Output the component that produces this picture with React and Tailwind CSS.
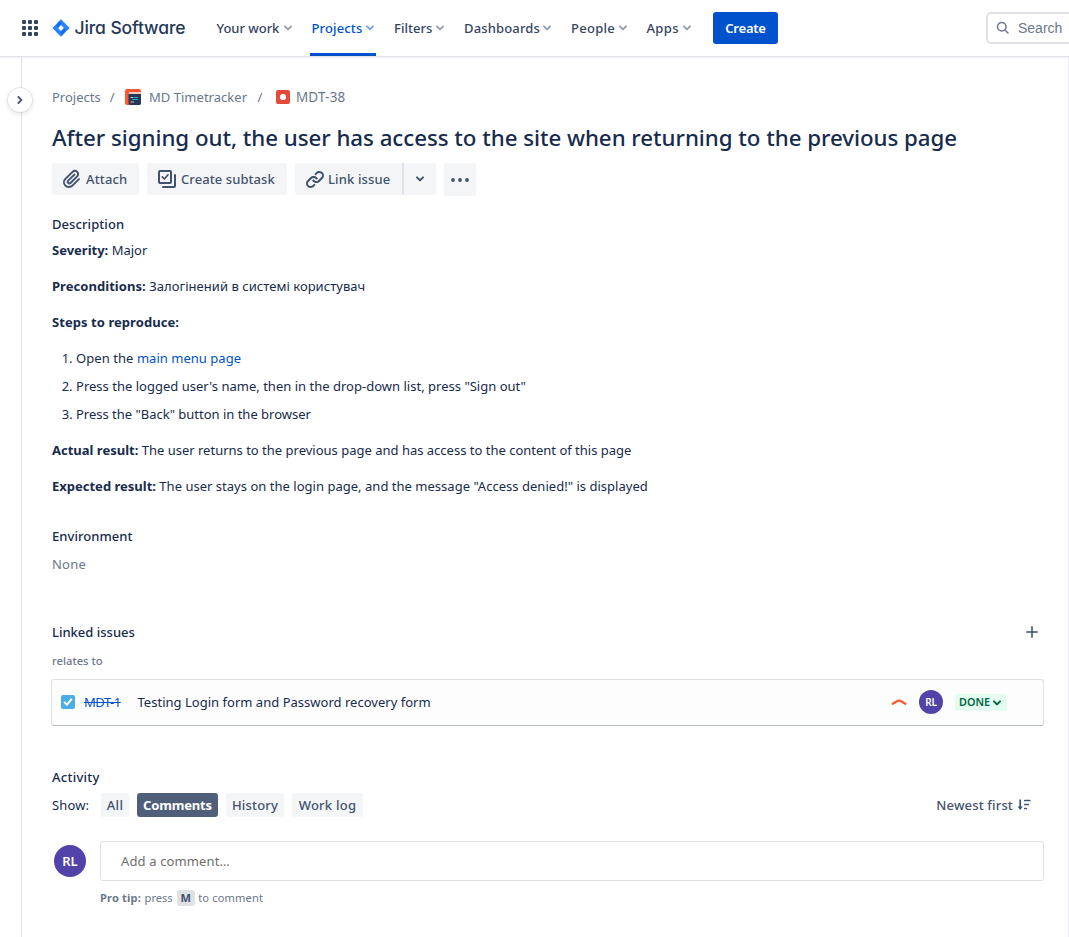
import React from 'react';

const CHEVRON =
  'M8.292 10.293a1.009 1.009 0 000 1.419l2.939 2.965c.218.215.5.322.779.322s.556-.107.769-.322l2.93-2.955a1.01 1.01 0 000-1.419.987.987 0 00-1.406 0l-2.298 2.317-2.307-2.327a.99.99 0 00-1.406 0z';

function Chevron({ className = '' }) {
  return (
    <svg viewBox="7 7.6 10 10" className={`h-2.5 w-2.5 shrink-0 ${className}`} fill="currentColor">
      <path d={CHEVRON} />
    </svg>
  );
}

function AppSwitcherIcon() {
  const steps = [0, 6, 12];
  return (
    <svg viewBox="0 0 16 16" className="h-4 w-4 shrink-0 text-[#344563]" fill="currentColor">
      {steps.map((y) => steps.map((x) => <rect key={`${x}-${y}`} x={x} y={y} width="4" height="4" rx="1" />))}
    </svg>
  );
}

function JiraMark() {
  return (
    <svg viewBox="0 0 18 18" className="ml-3.5 h-[18px] w-[18px] shrink-0">
      <path d="M9 0.2 17.2 8.4a.9.9 0 0 1 0 1.2L9 17.8.8 9.6a.9.9 0 0 1 0-1.2z" fill="#2684FF" />
      <path d="M9 2v4.100L6.100 9 4.600 7.500Q4.500 5 9 2z" fill="#0052CC" opacity=".5" />
      <path d="M9 16v-4.100L11.900 9l1.500 1.500Q13.500 13 9 16z" fill="#0052CC" opacity=".5" />
      <path d="M9 6.100 11.900 9 9 11.900 6.100 9z" fill="#fff" />
    </svg>
  );
}

const navItems = [
  { label: 'Your work', width: 'w-[76px]', track: 'tracking-[-0.03px]' },
  { label: 'Projects', width: 'w-[63.5px]', track: 'tracking-[0.14px]', active: true },
  { label: 'Filters', width: 'w-[51px]', track: 'tracking-[0.03px]' },
  { label: 'Dashboards', width: 'w-[88px]', track: 'tracking-[0.16px]' },
  { label: 'People', width: 'w-[56.5px]', track: 'tracking-[0.27px]' },
  { label: 'Apps', width: 'w-[45px]', track: 'tracking-[0.35px]' },
];

function Header() {
  return (
    <header className="relative z-10 flex h-14 shrink-0 items-center overflow-visible bg-white pl-[22px] shadow-[0_1px_0_#dfe1e6,0_2px_2px_rgba(9,30,66,0.06)]">
      <AppSwitcherIcon />
      <JiraMark />
      <span className="ml-[4.500px] w-[138px] shrink-0 whitespace-nowrap text-[17.5px] font-[450] leading-5 tracking-[-0.1px] text-[#253858] [font-family:Inter,sans-serif] [font-feature-settings:'cv11']">
        Jira Software
      </span>
      <nav className="ml-1 flex h-full shrink-0 gap-[19px]">
        {navItems.map((n) => (
          <a
            key={n.label}
            className={`relative flex h-full items-center justify-between whitespace-nowrap font-medium ${n.width} ${n.track} ${
              n.active ? 'text-[#0052CC]' : 'text-[#344563]'
            }`}
          >
            {n.label}
            <Chevron className="opacity-50" />
            {n.active && <span className="absolute -left-[1.5px] bottom-0 h-[3px] w-[66px] bg-[#0052CC]" />}
          </a>
        ))}
      </nav>
      <button className="ml-[21.5px] h-8 w-[65px] shrink-0 rounded-[3px] bg-[#0052CC] font-semibold tracking-[-0.2px] text-white">
        Create
      </button>
      <div className="ml-[208px] flex h-8 w-[160px] shrink-0 items-center rounded-[5px] border-2 border-[#DFE1E6] pl-2 text-[#6B778C]">
        <svg viewBox="0 0 14 14" className="h-3.5 w-3.5" fill="none" stroke="#6B778C" strokeWidth="1.5">
          <circle cx="5.800" cy="5.800" r="4.300" />
          <path d="M9 9 12 12" strokeLinecap="round" />
        </svg>
        <span className="ml-2 text-sm [font-family:'Liberation_Sans',sans-serif]">Search</span>
      </div>
    </header>
  );
}

function Breadcrumbs() {
  return (
    <div className="mt-[31px] flex h-5 items-center whitespace-nowrap text-[#6B778C]">
      <span>Projects</span>
      <span className="ml-[9px]">/</span>
      <svg viewBox="0 0 16 16" className="ml-2.5 h-4 w-4">
        <rect width="16" height="16" rx="2" fill="#FF5630" />
        <path d="M3.500 3H16v11a2 2 0 0 1-2 2H5.500a2 2 0 0 1-2-2z" fill="#253858" />
        <path d="M3.500 5V4a1 1 0 0 1 1-1H16v2z" fill="#F4C9BF" />
        <path d="M5.500 8.500h3M6 13h3" stroke="#C1C7D0" strokeWidth="1" />
        <path d="M9 8.500h4M7 10.500h6" stroke="#2BA3C4" strokeWidth="1" />
        <path d="M5 13h1.500" stroke="#FF5630" strokeWidth="1" />
      </svg>
      <span className="ml-[8.500px] tracking-[0.02px]">MD Timetracker</span>
      <span className="ml-[10.500px]">/</span>
      <svg viewBox="0 0 14 14" className="ml-3.5 h-3.5 w-3.5">
        <rect width="14" height="14" rx="2" fill="#E5493A" />
        <circle cx="7" cy="7" r="3.100" fill="#fff" />
      </svg>
      <span className="ml-[5.500px] text-[13.5px] tracking-[0.19px]">MDT-38</span>
    </div>
  );
}

function Toolbar() {
  const base = 'flex h-8 items-center bg-[#F4F5F7] font-medium text-[#42526E]';
  return (
    <div className="mt-[11px] flex h-8 items-start gap-2 whitespace-nowrap">
      <button className={`${base} w-[87px] rounded-[3px] pl-2`}>
        <svg viewBox="0 0 24 24" className="h-6 w-6" fill="currentColor">
          <path d="M11.643 17.965c-1.53 1.495-4.016 1.496-5.542.004a3.773 3.773 0 01.002-5.412l7.147-6.985a2.316 2.316 0 013.233-.003c.893.873.895 2.282.004 3.153l-6.703 6.55a.653.653 0 01-.914-.008.62.62 0 010-.902l6.229-6.087a.941.941 0 000-1.353.995.995 0 00-1.384 0l-6.23 6.087a2.502 2.502 0 000 3.607 2.643 2.643 0 003.683.009l6.703-6.55a4.074 4.074 0 00-.003-5.859 4.306 4.306 0 00-6.002.003l-7.148 6.985a5.655 5.655 0 00-.001 8.118c2.29 2.239 6.015 2.238 8.31-.005l6.686-6.533a.941.941 0 000-1.353.995.995 0 00-1.384 0l-6.686 6.534z" />
        </svg>
        <span className="ml-0.5 tracking-[0.14px]">Attach</span>
      </button>
      <button className={`${base} w-[140px] rounded-[3px] pl-[11px]`}>
        <svg viewBox="0 0 18 18" className="h-[18px] w-[18px]" fill="none" stroke="currentColor" strokeWidth="2" strokeLinecap="round" strokeLinejoin="round">
          <rect x="1" y="1" width="12" height="12" rx="1" />
          <path d="M4.200 6.900 6.400 9 10 4.800" strokeWidth="1.700" />
          <path d="M17 5v11a1 1 0 0 1-1 1H5" />
        </svg>
        <span className="ml-[5px] tracking-[0.08px]">Create subtask</span>
      </button>
      <div className="flex">
        <button className={`${base} w-[107px] rounded-l-[3px] pl-2`}>
          <svg viewBox="0 0 24 24" className="h-6 w-6" fill="currentColor">
            <path d="M12.856 5.457l-.937.92a1.002 1.002 0 000 1.437 1.047 1.047 0 001.463 0l.984-.966c.967-.95 2.542-1.135 3.602-.288a2.54 2.54 0 01.203 3.81l-2.903 2.852a2.646 2.646 0 01-3.696 0l-1.11-1.09L9 13.57l1.108 1.089c1.822 1.788 4.802 1.788 6.622 0l2.905-2.852a4.558 4.558 0 00-.357-6.82c-1.893-1.517-4.695-1.226-6.422.47" />
            <path d="M11.144 19.543l.937-.92a1.002 1.002 0 000-1.437 1.047 1.047 0 00-1.462 0l-.985.966c-.967.95-2.542 1.135-3.602.288a2.54 2.54 0 01-.203-3.81l2.903-2.852a2.646 2.646 0 013.696 0l1.11 1.09L15 11.43l-1.108-1.089c-1.822-1.788-4.802-1.788-6.622 0l-2.905 2.852a4.558 4.558 0 00.357 6.82c1.893 1.517 4.695 1.226 6.422-.47" />
          </svg>
          <span className="ml-px tracking-[0.13px]">Link issue</span>
        </button>
        <button className={`${base} w-[34px] justify-center rounded-r-[3px] border-l-2 border-[#DFE1E6]`}>
          <Chevron />
        </button>
      </div>
      <button className="flex h-[33px] w-8 items-center justify-center rounded-[3px] bg-[#F4F5F7] text-[#42526E]">
        <svg viewBox="0 0 18 4" className="h-1 w-[18px]" fill="currentColor">
          <circle cx="2" cy="2" r="1.900" />
          <circle cx="9" cy="2" r="1.900" />
          <circle cx="16" cy="2" r="1.900" />
        </svg>
      </button>
    </div>
  );
}

function Description() {
  return (
    <section>
      <h2 className="mt-[19px] font-medium tracking-[0.08px]">Description</h2>
      <p className="mt-1.5">
        <b className="font-bold">Severity:</b> Major
      </p>
      <p className="mt-4">
        <b className="font-bold tracking-[0.05px]">Preconditions:</b>{' '}
        <span className="tracking-[0.04px]">Залогінений в системі користувач</span>
      </p>
      <p className="mt-4">
        <b className="font-bold tracking-[0.06px]">Steps to reproduce:</b>
      </p>
      <ol className="mt-4 flex list-decimal flex-col gap-2 pl-6">
        <li>
          <span className="tracking-[0.06px]">Open the </span>
          <a className="tracking-[0.03px] text-[#0052CC]">main menu page</a>
        </li>
        <li className="tracking-[0.012px]">Press the logged user's name, then in the drop-down list, press "Sign out"</li>
        <li className="tracking-[-0.01px]">Press the "Back" button in the browser</li>
      </ol>
      <p className="mt-4">
        <b className="font-bold">Actual result:</b> The user returns to the previous page and has access to the content of this page
      </p>
      <p className="mt-4">
        <b className="font-bold">Expected result:</b>{' '}
        <span className="tracking-[0.022px]">The user stays on the login page, and the message "Access denied!" is displayed</span>
      </p>
      <h2 className="mt-[30px] font-medium tracking-[0.05px]">Environment</h2>
      <p className="mt-2 tracking-[0.2px] text-[#6B778C]">None</p>
    </section>
  );
}

function LinkedIssues() {
  return (
    <section>
      <div className="mt-12 flex h-5 items-center justify-between">
        <h2 className="font-medium">Linked issues</h2>
        <svg viewBox="0 0 12 12" className="mr-1.5 h-3 w-3" stroke="#42526E" strokeWidth="1.600" strokeLinecap="round">
          <path d="M6 .8v10.400M.8 6h10.400" />
        </svg>
      </div>
      <h3 className="mt-[11px] text-[11.100px] font-medium leading-4 tracking-[0.05px] text-[#6B778C]">relates to</h3>
      <div className="-ml-px mt-2.5 flex h-[47px] items-center rounded-[3px] border border-[#DFE1E6] border-b-[#B3BAC5] bg-[#fdfdfe] pb-0.5 pl-[9px] pr-9">
        <svg viewBox="0 0 14 14" className="h-3.5 w-3.5">
          <rect width="14" height="14" rx="2" fill="#4BADE8" />
          <path d="M3.600 7.400 6 9.700 10.400 4.400" fill="none" stroke="#fff" strokeWidth="2" strokeLinecap="round" strokeLinejoin="round" />
        </svg>
        <a className="ml-[9px] w-[44px] tracking-[-0.5px] text-[#0052CC] line-through">MDT-1</a>
        <span className="ml-[9.5px] flex-1 tracking-[0.018px]">Testing Login form and Password recovery form</span>
        <svg viewBox="0 0 16 8" className="h-2 w-4" fill="none" stroke="#FF5630" strokeWidth="2.200" strokeLinecap="round" strokeLinejoin="round">
          <path d="M1.600 5.800 7 2.800Q8 2.300 9 2.800L14.400 5.800" />
        </svg>
        <span className="ml-3 flex h-6 w-6 items-center justify-center rounded-full bg-[#5243AA] text-[10px] font-semibold leading-none tracking-[-0.2px] text-white">
          RL
        </span>
        <span className="ml-3 mt-0.5 flex h-[17px] w-[52px] items-center rounded-[3px] bg-[#E3FCEF] pl-1 text-[10.800px] font-semibold leading-none text-[#006644]">
          DONE
          <Chevron className="ml-0.5" />
        </span>
      </div>
    </section>
  );
}

const tabs = [
  { label: 'All', style: 'w-7 bg-[#F4F5F7] font-medium tracking-[0.4px] text-[#42526E]' },
  { label: 'Comments', style: 'w-[81px] bg-[#505F79] font-bold tracking-[-0.15px] text-white' },
  { label: 'History', style: 'w-[58px] bg-[#F4F5F7] font-medium tracking-[0.2px] text-[#42526E]' },
  { label: 'Work log', style: 'w-[71px] bg-[#F4F5F7] font-medium tracking-[0.25px] text-[#42526E]' },
];

function Activity() {
  return (
    <section>
      <h2 className="mt-[41px] font-medium tracking-[0.25px]">Activity</h2>
      <div className="mt-1.5 flex h-6 items-center">
        <span className="w-[49px] tracking-[0.12px]">Show:</span>
        <div className="flex flex-1 gap-2">
          {tabs.map((t) => (
            <button key={t.label} className={`flex h-6 items-center justify-center whitespace-nowrap rounded-[3px] ${t.style}`}>
              {t.label}
            </button>
          ))}
        </div>
        <span className="font-medium tracking-[0.15px] text-[#42526E]">Newest first</span>
        <svg viewBox="0 0 14 12" className="ml-1 mr-[13px] h-3 w-3.5" fill="none" stroke="#42526E" strokeWidth="1.700" strokeLinecap="round">
          <path d="M3.200 1v8" />
          <path d="M.6 7.600h5.200L3.200 11z" fill="#42526E" stroke="none" />
          <path d="M7.800 1.500h5M7.800 5.500h3.500M7.800 9.500h1.500" strokeWidth="1.700" />
        </svg>
      </div>
      <div className="mt-6 flex items-start">
        <span className="ml-0.5 mt-1 flex h-8 w-8 items-center justify-center rounded-full bg-[#5243AA] text-[13px] font-semibold text-white">
          RL
        </span>
        <div className="ml-3.5 flex-1">
          <div className="flex h-10 items-center rounded-[3px] border border-[#DFE1E6] pl-5 tracking-[0.13px] text-[#6E6E6E]">
            Add a comment…
          </div>
          <p className="mt-[9px] flex items-center text-[11.100px] leading-4 text-[#6B778C]">
            <b className="font-bold tracking-[0.17px]">Pro tip:</b>
            <span className="ml-[3.500px]">press</span>
            <kbd className="ml-1 flex h-4 w-[18px] items-center justify-center rounded-[3px] bg-[#DFE1E6] font-bold text-[#42526E] [font-family:'Noto_Sans',sans-serif]">
              M
            </kbd>
            <span className="ml-[3.500px] tracking-[0.15px]">to comment</span>
          </p>
        </div>
      </div>
    </section>
  );
}

export default function App() {
  return (
    <div className="flex h-[937px] w-full flex-col overflow-hidden bg-white text-[13px] leading-5 text-[#172B4D] [font-family:'Noto_Sans',sans-serif]">
      <Header />
      <div className="flex min-h-0 flex-1">
        <aside className="relative w-[22px] shrink-0 border-r border-[#E2E3E8]">
          <button className="absolute left-2 top-8 flex h-6 w-6 items-center justify-center rounded-full bg-white text-[#505F79] shadow-[0_0_0_1px_rgba(9,30,66,0.08),0_2px_4px_1px_rgba(9,30,66,0.08)]">
            <Chevron className="-rotate-90" />
          </button>
        </aside>
        <main className="min-w-0 flex-1 border-r border-[#EBECF0] pl-[30px] pr-6">
          <Breadcrumbs />
          <h1 className="mt-[17px] whitespace-nowrap text-[22.300px] font-medium leading-7 tracking-[-0.035px]">
            After signing out, the user has access to the site when returning to the previous page
          </h1>
          <Toolbar />
          <Description />
          <LinkedIssues />
          <Activity />
        </main>
      </div>
    </div>
  );
}
